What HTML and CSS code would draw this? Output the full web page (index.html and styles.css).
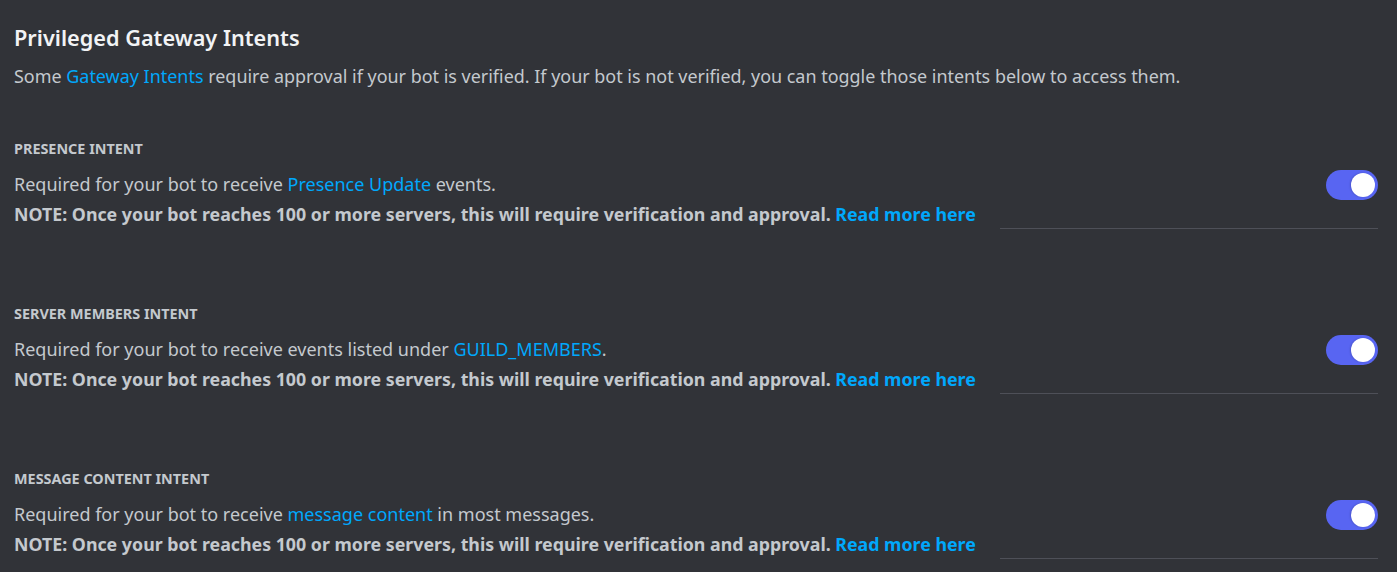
FILE: index.html
```html
<!DOCTYPE html>
<html>
<head>
<meta charset="utf-8">
<link rel="stylesheet" href="styles.css">
</head>
<body>
<div class="page">
  <h2 class="title">Privileged Gateway Intents</h2>
  <p class="subtitle">Some <a class="link">Gateway Intents</a> require approval if your bot is verified. If your bot is not verified, you can toggle those intents below to access them.</p>

  <section class="intent">
    <div class="label">PRESENCE INTENT</div>
    <div class="row">
      <div class="text">
        <div class="desc">Required for your bot to receive <a class="link">Presence Update</a> events.</div>
        <div class="note">NOTE: Once your bot reaches 100 or more servers, this will require verification and approval. <a class="link">Read more here</a></div>
      </div>
      <div class="toggle"><span class="knob"></span></div>
    </div>
    <div class="divider"></div>
  </section>

  <section class="intent">
    <div class="label">SERVER MEMBERS INTENT</div>
    <div class="row">
      <div class="text">
        <div class="desc">Required for your bot to receive events listed under <a class="link">GUILD_MEMBERS</a>.</div>
        <div class="note">NOTE: Once your bot reaches 100 or more servers, this will require verification and approval. <a class="link">Read more here</a></div>
      </div>
      <div class="toggle"><span class="knob"></span></div>
    </div>
    <div class="divider"></div>
  </section>

  <section class="intent">
    <div class="label">MESSAGE CONTENT INTENT</div>
    <div class="row">
      <div class="text">
        <div class="desc">Required for your bot to receive <a class="link">message content</a> in most messages.</div>
        <div class="note">NOTE: Once your bot reaches 100 or more servers, this will require verification and approval. <a class="link">Read more here</a></div>
      </div>
      <div class="toggle"><span class="knob"></span></div>
    </div>
    <div class="divider"></div>
  </section>
</div>
</body>
</html>
```
FILE: styles.css
```css
* { box-sizing: border-box; }
html, body { margin: 0; padding: 0; background: #313338; }
body {
  font-family: "Noto Sans", "Open Sans", sans-serif;
  color: #dbdee1;
  overflow: hidden;
}
.page {
  padding: 24px 19px 0 14px;
}
.title {
  margin: 0;
  font-size: 21.7px;
  line-height: 28px;
  font-weight: 600;
  color: #f2f3f5;
}
.subtitle {
  margin: 12px 0 0 0;
  font-size: 17.95px;
  line-height: 24px;
  color: #c4c9ce;
}
.link { color: #00a8fc; text-decoration: none; }
.intent {
  display: flex;
  flex-direction: column;
}
.intent:first-of-type { margin-top: 52px; }
.intent + .intent { margin-top: 76px; }
.label {
  font-size: 14.4px;
  line-height: 18px;
  font-weight: 700;
  color: #c4c9ce;
}
.row {
  display: flex;
  align-items: flex-start;
  justify-content: space-between;
  margin-top: 14px;
}
.desc {
  font-size: 18px;
  line-height: 24px;
  color: #c4c9ce;
}
.note {
  margin-top: 6px;
  font-size: 17.8px;
  line-height: 24px;
  font-weight: 700;
  color: #c4c9ce;
}
.toggle {
  width: 52px;
  height: 30px;
  margin-top: -2px;
  border-radius: 15px;
  background: #5865f2;
  display: flex;
  align-items: center;
  justify-content: flex-end;
  padding-right: 3px;
  flex-shrink: 0;
}
.knob {
  width: 24px;
  height: 24px;
  border-radius: 50%;
  background: #ffffff;
  box-shadow: -1px 0 2px rgba(0, 0, 0, 0.15);
}
.divider {
  align-self: flex-end;
  width: 378px;
  height: 1px;
  background: #4e5058;
  margin-top: 2px;
}
```
